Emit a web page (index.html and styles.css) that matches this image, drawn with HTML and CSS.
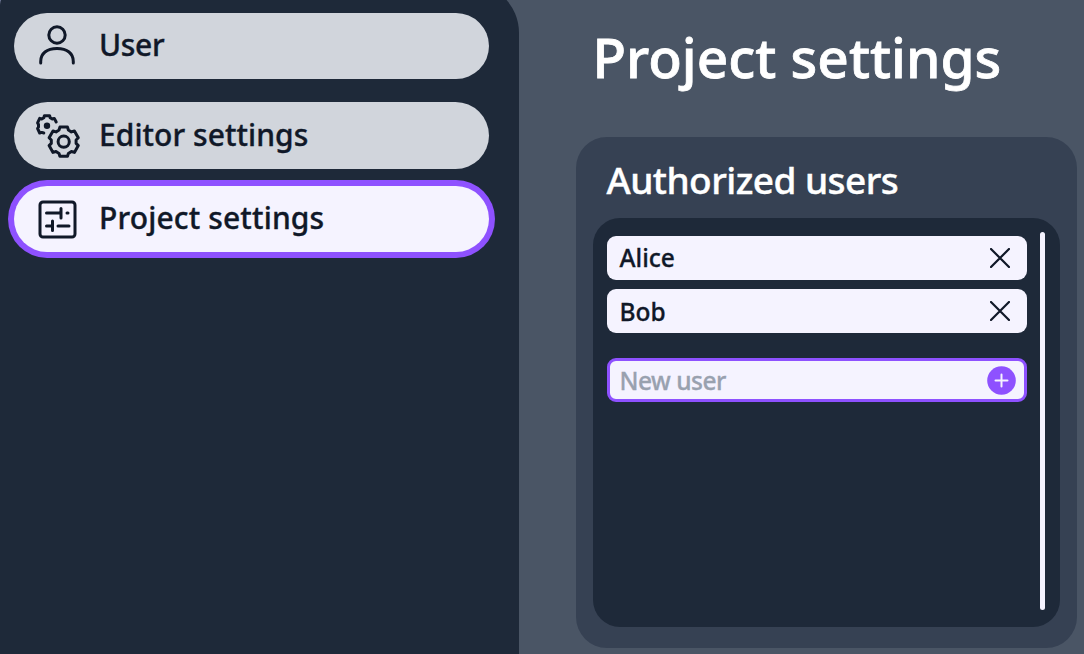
FILE: index.html
```html
<!DOCTYPE html>
<html lang="en">
<head>
<meta charset="utf-8">
<title>Project settings</title>
<link rel="stylesheet" href="styles.css">
</head>
<body>
<div class="app">
  <nav class="sidebar">
    <a class="tab">
      <svg class="icon" viewBox="0 0 48 48"><circle cx="24" cy="13" r="8.2"/><path d="M7.700 41v-1.500c0-8 6-13 16.300-13s16.300 5 16.300 13V41"/></svg>
      <span class="label user">User</span>
    </a>
    <a class="tab">
      <svg class="icon" viewBox="0 0 48 48">
        <g transform="translate(30.700 30.700)">
          <circle r="5.600"/>
          <path d="M-3.800-14.600L3.800-14.600 4.700-11.700 7.700-9.800 10.700-10.700 14.600-3.900 12.400-1.700 12.400 1.700 14.600 3.900 10.700 10.700 7.700 9.800 4.700 11.700 3.800 14.600-3.800 14.600-4.700 11.700-7.700 9.800-10.700 10.700-14.600 3.900-12.400 1.700-12.400-1.700-14.600-3.900-10.700-10.700-7.700-9.800-4.700-11.700z"/>
        </g>
        <path d="M23.200 11L21.300 7.400 19.300 8 17.200 6.700 16.600 4.700 11.400 4.700 10.800 6.700 8.700 8 6.700 7.400 4.600 11.900 5.500 13.500 5.500 15.900 4.600 17.500 6.700 22 8.700 21.400 10.800 22"/>
        <circle class="dot" cx="14" cy="14.700" r="3.200"/>
      </svg>
      <span class="label editor">Editor settings</span>
    </a>
    <a class="tab active">
      <svg class="icon" viewBox="0 0 48 48"><rect x="7" y="7" width="35" height="35" rx="3"/><path d="M13.500 18h13M28 13.500v9.500M34 18h1M13.500 31h5M19.500 26v9.500M25 31h11"/></svg>
      <span class="label project">Project settings</span>
    </a>
  </nav>
  <main class="main">
    <h1 class="title"><span>Project settings</span></h1>
    <section class="card">
      <h2 class="subtitle"><span>Authorized users</span></h2>
      <div class="panel">
        <div class="list">
          <div class="row"><span class="alice">Alice</span><svg class="close" viewBox="0 0 20 20"><path d="M1 1l18 18M19 1L1 19"/></svg></div>
          <div class="row"><span class="bob">Bob</span><svg class="close" viewBox="0 0 20 20"><path d="M1 1l18 18M19 1L1 19"/></svg></div>
          <div class="row new"><span class="hint">New user</span><svg class="add" viewBox="0 0 29 29"><circle cx="14.500" cy="14.500" r="14.300"/><path d="M8.500 14.500h12M14.500 8.500v12"/></svg></div>
        </div>
        <div class="scrollbar"></div>
      </div>
    </section>
  </main>
</div>
</body>
</html>
```
FILE: styles.css
```css
* { box-sizing: border-box; }
body { margin: 0; background: #4a5565; font-family: "Noto Sans", sans-serif; font-weight: 500; }
.app { display: flex; height: 654px; overflow: hidden; background: linear-gradient(90deg, #c4c9f5 4px, #4a5565 4px); }
.sidebar { width: 518.5px; height: 704px; margin-top: -17px; padding: 29.500px 0 0 14px; border-radius: 22px 50px 0 0; background: #1e2939; flex: none; }
.tab { display: flex; align-items: center; width: 475px; height: 66.500px; margin-bottom: 23px; padding-left: 19px; border-radius: 34px; background: #d1d5dc; color: #101828; }
.tab.active { margin-top: -6px; background: #f5f3ff; box-shadow: 0 0 0 6px #8e51ff; }
.icon { width: 48px; height: 48px; flex: none; fill: none; stroke: #101828; stroke-width: 3; stroke-linecap: round; stroke-linejoin: round; }
.dot { fill: #101828; stroke: none; }
.label { margin: 0 0 1px 18px; font-size: 30px; line-height: 40px; white-space: nowrap; -webkit-text-stroke: 0.35px currentColor; }
.user { letter-spacing: -0.3px; }
.editor { letter-spacing: 0.05px; }
.project { letter-spacing: 0.15px; }
.main { flex: 1; padding-left: 57px; }
.title { margin: 0; padding: 18px 0 0 17px; height: 136.500px; font-size: 55px; line-height: 78px; font-weight: 500; color: #fff; white-space: nowrap; -webkit-text-stroke: 0.8px #fff; }
.card { width: 501.500px; height: 511.500px; padding: 23px 17px 0; border-radius: 31px; background: #364153; }
.subtitle { margin: 0; padding-left: 14px; height: 58.500px; font-size: 37px; line-height: 40px; font-weight: 500; letter-spacing: -0.55px; color: #fff; white-space: nowrap; -webkit-text-stroke: 0.4px #fff; }
.panel { display: flex; height: 409px; padding: 14px 15.500px 17px 14px; border-radius: 27px; background: #1e2939; justify-content: space-between; }
.list { width: 420px; padding-top: 3.500px; }
.row { display: flex; align-items: center; justify-content: space-between; height: 44px; margin-bottom: 9.500px; padding: 0 17px 0 13px; border-radius: 9px; background: #f5f3ff; color: #101828; font-size: 24.500px; white-space: nowrap; -webkit-text-stroke: 0.3px currentColor; }
.row.new { margin-top: 25px; padding: 0 8px 0 10px; border: 3px solid #8e51ff; color: #99a1af; letter-spacing: -0.5px; }
.close { width: 20px; height: 20px; fill: none; stroke: #101828; stroke-width: 2.200; stroke-linecap: round; }
.add { width: 29px; height: 29px; fill: #8e51ff; stroke: #f5f3ff; stroke-width: 2; stroke-linecap: round; }
.add circle { stroke: none; }
.scrollbar { width: 5px; height: 378px; border-radius: 3px; background: #f5f3ff; }
```
